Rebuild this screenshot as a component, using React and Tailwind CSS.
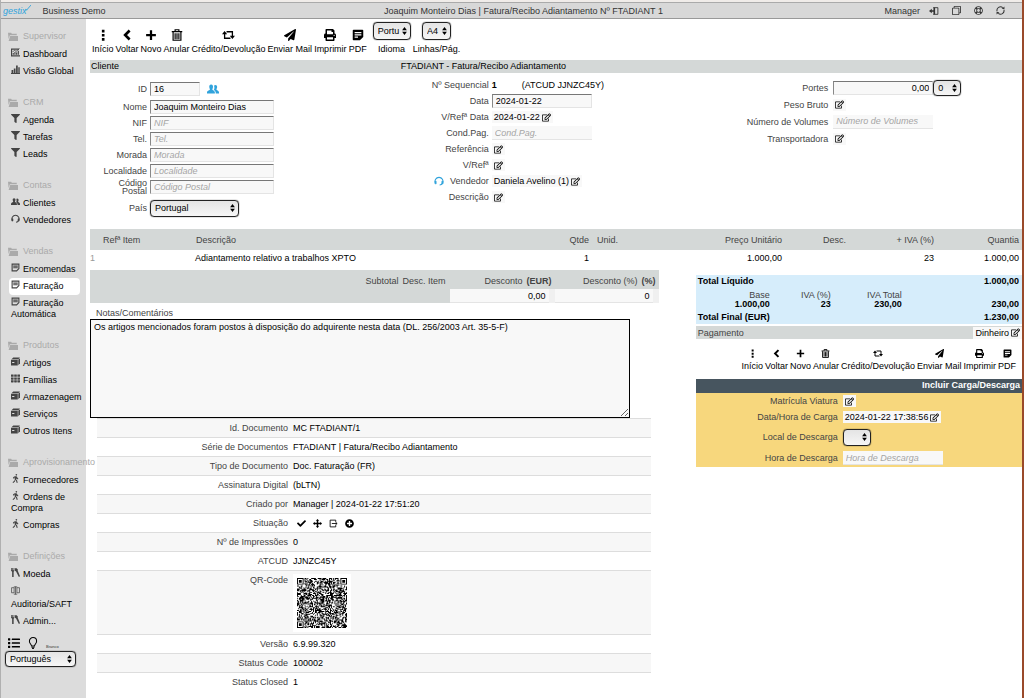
import clsx from 'clsx';
import {
    FaCheck,
    FaFilter,
    FaList,
    FaPaperPlane,
    FaPlusCircle,
    FaPrint,
    FaRegClone,
    FaRegEdit,
    FaRegLifeRing,
    FaTh,
    FaWalking,
} from 'react-icons/fa';

/* ---------- icons ---------- */

const DotsIcon = ({ className }) => (
    <svg viewBox="0 0 16 16" className={className} fill="currentColor" aria-hidden="true">
        <path d="M6.500 1h3.500v3.500H6.500zM6.500 6.500h3.500V10H6.500zM6.500 12h3.500v3.500H6.500z" />
    </svg>
);

const BackIcon = ({ className }) => (
    <svg viewBox="0 0 16 16" className={className} fill="none" stroke="currentColor" strokeWidth="3.500" aria-hidden="true">
        <path d="M11.500 2L5.500 8l6 6" />
    </svg>
);

const PlusIcon = ({ className }) => (
    <svg viewBox="0 0 16 16" className={className} fill="currentColor" aria-hidden="true">
        <path d="M6.500 1.500h3v5h5v3h-5v5h-3v-5h-5v-3h5z" />
    </svg>
);

const FolderIcon = ({ className }) => (
    <svg viewBox="0 0 16 14" className={className} fill="currentColor" aria-hidden="true">
        <path d="M0 1h5l1 1.500h8V5H3L1 11z" />
        <path d="M3.500 6H16v8H1z" />
    </svg>
);

const UsersIcon = ({ className }) => (
    <svg viewBox="0 0 16 16" className={className} fill="currentColor" aria-hidden="true">
        <path d="M5.500 2C7.500 2 8 3.500 8 5s-.5 2.500-1 3.200c0 1.300 3.500 1.800 3.500 4.300V14H0v-1.500c0-2.500 4-3 4-4.300C3.500 7.500 3 6.500 3 5s.5-3 2.500-3z" />
        <path d="M11 2.500c1.800 0 2.500 1.300 2.500 2.700s-.5 2.200-1 3c0 1.300 3.500 1.800 3.500 4V14h-4.300c.2-3-1.200-3.800-2.500-4.800.8-1.500 1-3.700.2-5.700.4-.7 1-1 1.600-1z" />
    </svg>
);

const NoteIcon = ({ className }) => (
    <svg viewBox="0 0 16 16" className={className} fill="currentColor" aria-hidden="true">
        <path fillRule="evenodd" d="M2 1h12a1 1 0 0 1 1 1v8.500l-4.500 4.500H2a1 1 0 0 1-1-1V2a1 1 0 0 1 1-1zm1.500 3v1.700h9V4zm0 3v1.700h9V7zm0 3v1.700H8V10z" />
    </svg>
);

const NoteOutlineIcon = ({ className }) => (
    <svg viewBox="0 0 16 16" className={className} fill="none" stroke="currentColor" strokeWidth="2" aria-hidden="true">
        <path d="M2 2h12v8l-4 4H2z" />
        <path d="M4 5.500h8M4 8.500h8" />
    </svg>
);

const TrashIcon = ({ className }) => (
    <svg viewBox="0 0 16 16" className={className} fill="none" stroke="currentColor" strokeWidth="1.600" aria-hidden="true">
        <path d="M1 3.500h14M5.500 3V1h5v2M2.800 4v11h10.400V4M5.500 5.500v8M8 5.500v8M10.500 5.500v8" />
    </svg>
);

const RetweetIcon = ({ className }) => (
    <svg viewBox="0 0 20 14" className={className} fill="none" stroke="currentColor" strokeWidth="2" aria-hidden="true">
        <path d="M4 5v7h9M16 9V2H7" />
        <path d="M0 6l4-5 4 5zM12 8l4 5 4-5z" fill="currentColor" stroke="none" />
    </svg>
);

const ChartIcon = ({ className }) => (
    <svg viewBox="0 0 16 16" className={className} fill="currentColor" aria-hidden="true">
        <path d="M0 1h14v2H2v10h14v2H0z" />
        <path d="M3 12V9h2v3zM6 12V7h2v5zM9 12V8h2v4zM12 12V5h2v7z" />
        <path d="M3 7l3-3 3 2 6-5" fill="none" stroke="currentColor" strokeWidth="1.500" />
    </svg>
);

const BarsIcon = ({ className }) => (
    <svg viewBox="0 0 16 16" className={className} fill="currentColor" aria-hidden="true">
        <path d="M0 14h16v2H0zM1 9h3v5H1zM5 6h3v8H5zM9 1h3v13H9zM13 4h2.500v10H13z" />
    </svg>
);

const HeadsetIcon = ({ className }) => (
    <svg viewBox="0 0 16 16" className={className} fill="none" stroke="currentColor" strokeWidth="1.800" aria-hidden="true">
        <path d="M2.500 11.500A6.300 6.300 0 1 1 13.500 11.500c-.8 1.800-2 2.800-4.500 3" />
        <path d="M1.500 8.500h2v4h-2zM12.500 8.500h2v4h-2z" fill="currentColor" strokeWidth="1" />
    </svg>
);

const BoxIcon = ({ className }) => (
    <svg viewBox="0 0 16 16" className={className} fill="currentColor" aria-hidden="true">
        <path d="M4 1h12l-3 3H1z" />
        <path fillRule="evenodd" d="M0 5h12v10H0zm2 4v1.500h4V9z" />
        <path d="M13 5l3-3v9l-3 3.500z" />
    </svg>
);

const ToolsIcon = ({ className }) => (
    <svg viewBox="0 0 16 16" className={className} fill="currentColor" aria-hidden="true">
        <path d="M0 0h1.300v4h1V0h1.400v4h1V0H6v5L4.700 6.500V16H2V6.500L0 5z" />
        <path d="M7 1l2-1 3 2v3l4 9.500-2 1.500L9 6 7 5z" />
    </svg>
);

const ScaleIcon = ({ className }) => (
    <svg viewBox="0 0 16 16" className={className} fill="none" stroke="currentColor" strokeWidth="1.300" aria-hidden="true">
        <path d="M8 1v14M5 14.500h6M5 1.500h6M6 3H1v9h5M10 3h5v9h-5M5.500 3v9M10.500 3v9" />
    </svg>
);

const BulbIcon = ({ className }) => (
    <svg viewBox="0 0 16 20" className={className} fill="none" stroke="currentColor" strokeWidth="1.700" aria-hidden="true">
        <path d="M5.500 15c0-3-3.500-4-3.500-8a6 6 0 0 1 12 0c0 4-3.500 5-3.500 8z" />
        <path d="M5.500 17h5M6.500 19h3" />
    </svg>
);

const ExitIcon = ({ className }) => (
    <svg viewBox="0 0 18 16" className={className} aria-hidden="true">
        <path d="M8 2h8v12H8" fill="none" stroke="currentColor" strokeWidth="1.600" />
        <path d="M0 8l5-4v2.500h3V1l3 1.500v11L8 15V9.500H5V12z" fill="currentColor" />
    </svg>
);

const RefreshIcon = ({ className }) => (
    <svg viewBox="0 0 16 16" className={className} fill="none" stroke="currentColor" strokeWidth="1.800" aria-hidden="true">
        <path d="M2 9.500A6.200 6.200 0 0 1 12 3M14 6.500A6.200 6.200 0 0 1 4 13" />
        <path d="M10 5.500h5V1zM6 10.500H1V15z" fill="currentColor" stroke="none" />
    </svg>
);

const MoveIcon = ({ className }) => (
    <svg viewBox="0 0 16 16" className={className} fill="currentColor" aria-hidden="true">
        <path d="M8 0l3 3H9.300v3.700H13V5l3 3-3 3V9.300H9.300V13H11l-3 3-3-3h1.700V9.300H3V11L0 8l3-3v1.700h3.700V3H5z" />
    </svg>
);

const ExportIcon = ({ className }) => (
    <svg viewBox="0 0 16 16" className={className} fill="none" stroke="currentColor" strokeWidth="1.500" aria-hidden="true">
        <path d="M12 5V2H2v12h10v-3M5 8h9M11.500 5.500L14.500 8l-3 2.500" />
    </svg>
);

/* ---------- QR code ---------- */

const QR_SIZE = 53;

const inFinder = (x, y) => {
    const near = 8;
    const far = QR_SIZE - 9;
    return (x < near && y < near) || (x > far && y < near) || (x < near && y > far);
};

const buildQrPath = () => {
    let seed = 20240122;
    let path = '';
    for (let y = 0; y < QR_SIZE; y++) {
        for (let x = 0; x < QR_SIZE; x++) {
            seed = (seed * 1103515245 + 12345) % 2147483648;
            if (!inFinder(x, y) && seed / 2147483648 > 0.46) path += `M${x} ${y}h1v1h-1z`;
        }
    }
    [[0, 0], [QR_SIZE - 7, 0], [0, QR_SIZE - 7]].forEach(([x, y]) => {
        path += `M${x} ${y}h7v7h-7zM${x + 1} ${y + 1}v5h5v-5zM${x + 2} ${y + 2}h3v3h-3z`;
    });
    return path;
};

const qrPath = buildQrPath();

/* ---------- data ---------- */

const menu = [
    {
        title: 'Supervisor',
        items: [
            { label: 'Dashboard', icon: ChartIcon },
            { label: 'Visão Global', icon: BarsIcon },
        ],
    },
    {
        title: 'CRM',
        items: [
            { label: 'Agenda', icon: FaFilter },
            { label: 'Tarefas', icon: FaFilter },
            { label: 'Leads', icon: FaFilter },
        ],
    },
    {
        title: 'Contas',
        items: [
            { label: 'Clientes', icon: UsersIcon },
            { label: 'Vendedores', icon: HeadsetIcon },
        ],
    },
    {
        title: 'Vendas',
        items: [
            { label: 'Encomendas', icon: NoteOutlineIcon },
            { label: 'Faturação', icon: NoteOutlineIcon, active: true },
            { label: 'Faturação Automática', icon: NoteOutlineIcon },
        ],
    },
    {
        title: 'Produtos',
        items: [
            { label: 'Artigos', icon: BoxIcon },
            { label: 'Famílias', icon: FaTh },
            { label: 'Armazenagem', icon: BoxIcon },
            { label: 'Serviços', icon: BoxIcon },
            { label: 'Outros Itens', icon: BoxIcon },
        ],
    },
    {
        title: 'Aprovisionamento',
        items: [
            { label: 'Fornecedores', icon: FaWalking },
            { label: 'Ordens de Compra', icon: FaWalking },
            { label: 'Compras', icon: FaWalking },
        ],
    },
    {
        title: 'Definições',
        items: [
            { label: 'Moeda', icon: ToolsIcon },
            { label: 'Auditoria/SAFT', icon: ScaleIcon, ownLine: true },
            { label: 'Admin...', icon: ToolsIcon },
        ],
    },
];

const actions = [
    { label: 'Início', icon: DotsIcon },
    { label: 'Voltar', icon: BackIcon },
    { label: 'Novo', icon: PlusIcon },
    { label: 'Anular', icon: TrashIcon },
    { label: 'Crédito/Devolução', icon: RetweetIcon },
    { label: 'Enviar Mail', icon: FaPaperPlane },
    { label: 'Imprimir', icon: FaPrint },
    { label: 'PDF', icon: NoteIcon },
];

const clientFields = [
    { id: 'nome', label: 'Nome', value: 'Joaquim Monteiro Dias' },
    { id: 'nif', label: 'NIF' },
    { id: 'tel', label: 'Tel.' },
    { id: 'morada', label: 'Morada' },
    { id: 'localidade', label: 'Localidade' },
    { id: 'codigo-postal', label: 'Código Postal' },
];

const details = [
    ['Id. Documento', 'MC FTADIANT/1'],
    ['Série de Documentos', 'FTADIANT | Fatura/Recibo Adiantamento'],
    ['Tipo de Documento', 'Doc. Faturação (FR)'],
    ['Assinatura Digital', '(bLTN)'],
    ['Criado por', 'Manager | 2024-01-22 17:51:20'],
    ['Situação', 'status'],
    ['Nº de Impressões', '0'],
    ['ATCUD', 'JJNZC45Y'],
    ['QR-Code', 'qr'],
    ['Versão', '6.9.99.320'],
    ['Status Code', '100002'],
    ['Status Closed', '1'],
];

/* ---------- form pieces ---------- */

const Select = ({ label, id, className, children }) => (
    <span className={clsx('relative inline-block shrink-0', className)}>
        <select
            id={id}
            aria-label={label}
            className="block h-full w-full appearance-none rounded border border-[#222] bg-linear-to-b from-[#e4e4e4] to-[#f6f6f6] pl-1 text-black shadow-[0_0_1px_#000]"
        >
            {children}
        </select>
        <svg viewBox="0 0 6 10" className="pointer-events-none absolute top-1/2 right-1 h-2 w-[5px] -translate-y-1/2" aria-hidden="true">
            <path d="M0 4l3-4 3 4zM0 6l3 4 3-4z" />
        </svg>
    </span>
);

const TextInput = ({ className, plain, ...props }) => (
    <input
        type="text"
        className={clsx(
            'h-[14px] rounded-none bg-[#f8f8f8] px-[3px] text-black placeholder:text-[#a5a5a5] placeholder:italic',
            plain ? 'border-b border-[#e4e4e4]' : 'border-t border-r border-b border-l border-t-[#777] border-r-[#e4e4e4] border-b-[#e4e4e4] border-l-[#888]',
            className
        )}
        {...props}
    />
);

const EditButton = ({ label, text }) => (
    <button type="button" aria-label={label} className="flex h-3 items-center gap-0.5 bg-[#f8f8f8] px-0.5 text-black">
        {text}
        <FaRegEdit className="size-[9px]" />
    </button>
);

const Row = ({ label, htmlFor, labelClass, className, wide, children }) => (
    <div className={clsx('flex items-center', wide ? 'gap-[5px]' : 'gap-[3px]', className)}>
        <label htmlFor={htmlFor} className={clsx('shrink-0 text-right leading-2 text-[#444]', labelClass)}>
            {label}
        </label>
        {children}
    </div>
);

const Actions = ({ small }) => (
    <>
        {actions.map(({ label, icon: Icon }) => (
            <button key={label} type="button" className="flex flex-col items-center gap-[3px] whitespace-nowrap text-black">
                <Icon
                    className={clsx(
                        small ? 'h-[9px]' : 'h-3',
                        label === 'Crédito/Devolução' ? (small ? 'w-[10px]' : 'w-[13px]') : small ? 'w-[9px]' : 'w-3'
                    )}
                />
                <span className="leading-[11px]">{label}</span>
            </button>
        ))}
    </>
);

/* ---------- page sections ---------- */

const Header = () => (
    <header className="grid h-4 grid-cols-[1fr_auto_1fr] items-center border-b border-[#999] bg-[#d8d8d8] text-[#333]">
        <div className="flex items-center">
            <a href="#" className="flex items-start pl-0.5 leading-3 text-[#30a3dc] italic">
                gestix
                <svg viewBox="0 0 8 8" className="-ml-0.5 size-[6px]" aria-hidden="true">
                    <path d="M0 5l2 2L8 0" fill="none" stroke="currentColor" strokeWidth="1.200" />
                </svg>
            </a>
            <span className="pl-3">Business Demo</span>
        </div>
        <h1 className="pl-6">Joaquim Monteiro Dias | Fatura/Recibo Adiantamento Nº FTADIANT 1</h1>
        <nav className="flex items-center justify-end gap-[13px] pr-[17px]">
            <a href="#" className="-mr-1">Manager</a>
            <a href="#" aria-label="Sair"><ExitIcon className="size-[10px]" /></a>
            <a href="#" aria-label="Duplicar"><FaRegClone className="size-[9px] -scale-100" /></a>
            <a href="#" aria-label="Ajuda"><FaRegLifeRing className="size-[9px]" /></a>
            <a href="#" aria-label="Atualizar"><RefreshIcon className="size-[9px]" /></a>
        </nav>
    </header>
);

const Sidebar = () => (
    <aside className="w-[85px] shrink-0 bg-[#dcdcdc] pt-[9px]">
        <nav className="flex flex-col gap-[14px]">
            {menu.map((group) => (
                <section key={group.title}>
                    <h2 className="mb-0.5 flex h-4 items-center gap-[5px] pl-[7px] whitespace-nowrap text-[#aaa]">
                        <FolderIcon className="h-[9px] w-[10px] shrink-0" />
                        {group.title}
                    </h2>
                    {group.items.map(({ label, icon: Icon, active, ownLine }) => (
                        <a
                            key={label}
                            href="#"
                            className={clsx('ml-2 block rounded-sm py-[3px] pl-0.5 leading-[11px] text-black', active ? 'mr-[6px] bg-white' : 'mr-0.5')}
                        >
                            <Icon className={clsx('mr-[3px] size-[9px] text-[#444]', ownLine ? 'mb-1 block' : '-mt-1 inline-block align-baseline')} />
                            {label}
                        </a>
                    ))}
                </section>
            ))}
        </nav>
        <div className="mt-[5px] flex h-4 items-center gap-2 pl-[7px]">
            <button type="button" aria-label="Lista"><FaList className="size-3" /></button>
            <button type="button" aria-label="Sugestões"><BulbIcon className="h-3 w-[10px]" /></button>
            <span className="self-end text-[4px] leading-[8px] text-[#333]">Branco</span>
        </div>
        <Select label="Língua" className="ml-1 h-4 w-[71px]">
            <option>Português</option>
        </Select>
    </aside>
);

const DocumentForm = () => (
    <form className="grid h-[156px] grid-cols-3 items-start">
        <div className="pt-[6px]">
            <Row label="ID" htmlFor="id" labelClass="w-[57px]" className="h-5">
                <TextInput id="id" defaultValue="16" className="w-[50px]" />
                <UsersIcon className="ml-1 size-3 text-[#30a3dc]" />
            </Row>
            {clientFields.map((field) => (
                <Row key={field.id} label={field.label} htmlFor={field.id} labelClass="w-[57px] pl-3" className="h-4">
                    <TextInput id={field.id} defaultValue={field.value} placeholder={field.label} className="w-[124px]" />
                </Row>
            ))}
            <Row label="País" htmlFor="pais" labelClass="w-[57px]" className="mt-1 h-[18px]">
                <Select id="pais" className="h-[17px] w-[89px]">
                    <option>Portugal</option>
                </Select>
            </Row>
        </div>

        <div className="pt-1 *:h-4">
            <Row label="Nº Sequencial" labelClass="w-[88px]">
                <b className="w-[27px] text-black">1</b>
                <span className="text-black">(ATCUD JJNZC45Y)</span>
            </Row>
            <Row label="Data" htmlFor="data" labelClass="w-[88px]">
                <TextInput id="data" defaultValue="2024-01-22" className="w-[100px]" />
            </Row>
            <Row label="V/Refª Data" labelClass="w-[88px]">
                <EditButton label="Editar V/Refª Data" text="2024-01-22" />
            </Row>
            <Row label="Cond.Pag." htmlFor="cond-pag" labelClass="w-[88px]">
                <TextInput id="cond-pag" placeholder="Cond.Pag." plain className="w-[100px]" />
            </Row>
            <Row label="Referência" labelClass="w-[88px]">
                <EditButton label="Editar Referência" />
            </Row>
            <Row label="V/Refª" labelClass="w-[88px]">
                <EditButton label="Editar V/Refª" />
            </Row>
            <Row
                label={
                    <span className="flex items-center justify-end gap-[6px]">
                        <HeadsetIcon className="size-[10px] text-[#30a3dc]" />
                        Vendedor
                    </span>
                }
                labelClass="w-[88px]"
            >
                <EditButton label="Editar Vendedor" text="Daniela Avelino (1)" />
            </Row>
            <Row label="Descrição" labelClass="w-[88px]">
                <EditButton label="Editar Descrição" />
            </Row>
        </div>

        <div className="pt-[6px] *:h-[17px]">
            <Row label="Portes" htmlFor="portes" labelClass="w-[117px]" wide>
                <span className="flex items-center">
                    <TextInput id="portes" defaultValue="0,00" className="w-[100px] text-right" />
                    <Select label="IVA dos portes" className="h-4 w-7">
                        <option>0</option>
                    </Select>
                </span>
            </Row>
            <Row label="Peso Bruto" labelClass="w-[117px]" wide>
                <EditButton label="Editar Peso Bruto" />
            </Row>
            <Row label="Número de Volumes" htmlFor="volumes" labelClass="w-[117px]" wide>
                <TextInput id="volumes" placeholder="Número de Volumes" plain className="w-[100px]" />
            </Row>
            <Row label="Transportadora" labelClass="w-[117px]" wide>
                <EditButton label="Editar Transportadora" />
            </Row>
        </div>
    </form>
);

const ItemsTable = () => (
    <table className="w-full table-fixed">
        <colgroup>
            <col className="w-[13px]" />
            <col className="w-[92px]" />
            <col />
            <col className="w-8" />
            <col className="w-[100px]" />
            <col className="w-[93px]" />
            <col className="w-16" />
            <col className="w-[88px]" />
            <col className="w-[88px]" />
        </colgroup>
        <thead>
            <tr className="h-[21px] bg-[#d4d8d7] text-[#444] *:font-normal">
                <td />
                <th className="text-left">Refª Item</th>
                <th className="pl-px text-left">Descrição</th>
                <th className="text-right">Qtde</th>
                <th className="pl-2 text-left">Unid.</th>
                <th className="text-right">Preço Unitário</th>
                <th className="text-right">Desc.</th>
                <th className="text-right">+ IVA (%)</th>
                <th className="pr-[3px] text-right">Quantia</th>
            </tr>
        </thead>
        <tbody>
            <tr className="h-[15px] text-black">
                <td className="text-[#999]">1</td>
                <td />
                <td>Adiantamento relativo a trabalhos XPTO</td>
                <td className="text-right">1</td>
                <td />
                <td className="text-right">1.000,00</td>
                <td />
                <td className="text-right">23</td>
                <td className="pr-[3px] text-right">1.000,00</td>
            </tr>
        </tbody>
    </table>
);

const DetailValue = ({ value }) => {
    if (value === 'status') {
        return (
            <span className="flex h-3 items-center gap-[7px] pl-1 text-black">
                <FaCheck className="size-[9px]" />
                <MoveIcon className="size-[9px]" />
                <ExportIcon className="size-[9px]" />
                <FaPlusCircle className="size-[9px]" />
            </span>
        );
    }
    if (value === 'qr') {
        return (
            <span className="block bg-white p-1">
                <svg viewBox="0 0 53 53" className="size-[50px]" role="img" aria-label="QR-Code">
                    <path d={qrPath} fillRule="evenodd" />
                </svg>
            </span>
        );
    }
    return value;
};

const LeftPanel = () => (
    <div className="w-[61%]">
        <div className="grid grid-cols-[1fr_105px_104px] bg-[#d4d8d7] text-[#444]">
            <div className="flex h-[19px] items-center justify-end gap-1 pt-[3px] pr-1">
                <span>Subtotal</span>
                <span>Desc. Item</span>
            </div>
            <label htmlFor="desc-eur" className="flex items-center justify-end gap-1 pt-[3px] pr-[3px]">
                Desconto <b>(EUR)</b>
            </label>
            <label htmlFor="desc-pct" className="flex items-center justify-end gap-1 pt-[3px] pr-[3px]">
                Desconto (%) <b>(%)</b>
            </label>
            <div />
            <div className="flex bg-[#f0f0f0] pr-[6px]">
                <TextInput id="desc-eur" defaultValue="0,00" plain className="w-full text-right" />
            </div>
            <div className="flex bg-[#f0f0f0] pr-[6px]">
                <TextInput id="desc-pct" defaultValue="0" plain className="w-full text-right" />
            </div>
        </div>

        <label htmlFor="notas" className="block pt-1 pl-[6px] text-[#444]">Notas/Comentários</label>
        <textarea
            id="notas"
            className="block h-[99px] w-[95%] resize border border-black bg-[#f8f8f8] px-[3px] py-px text-black"
            defaultValue="Os artigos mencionados foram postos à disposição do adquirente nesta data (DL. 256/2003 Art. 35-5-F)"
        />

        <dl className="mr-2 ml-[7px]">
            {details.map(([label, value]) => (
                <div key={label} className="flex min-h-[19px] gap-[5px] border-t border-[#ddd] odd:bg-[#f7f7f7]">
                    <dt className="w-[191px] shrink-0 pt-[3px] text-right text-[#444]">{label}</dt>
                    <dd className={clsx('text-black', value === 'qr' ? 'pt-[3px] pb-0.5' : 'pt-[3px]')}>
                        <DetailValue value={value} />
                    </dd>
                </div>
            ))}
        </dl>
    </div>
);

const RightPanel = () => (
    <div className="w-[35%] pt-[5px]">
        <div className="bg-[#d6edfb] pr-[3px] pl-0.5 font-bold text-black">
            <div className="flex justify-between">
                <span>Total Líquido</span>
                <span>1.000,00</span>
            </div>
            <div className="grid grid-cols-[72px_61px_71px_1fr] items-end pt-1 pb-0.5 text-right leading-[9px]">
                <span className="font-normal text-[#444]">Base</span>
                <span className="font-normal text-[#444]">IVA (%)</span>
                <span className="font-normal text-[#444]">IVA Total</span>
                <span />
                <span>1.000,00</span>
                <span>23</span>
                <span>230,00</span>
                <span>230,00</span>
            </div>
            <div className="flex justify-between pb-px">
                <span>Total Final (EUR)</span>
                <span>1.230,00</span>
            </div>
        </div>

        <div className="mt-0.5 flex h-[13px] items-center justify-between bg-[#d4d8d7] pl-0.5 text-[#444]">
            <span>Pagamento</span>
            <EditButton label="Editar Pagamento" text="Dinheiro" />
        </div>

        <div className="flex h-10 items-start justify-end gap-0.5 pt-[10px] pr-[6px]">
            <Actions small />
        </div>

        <h3 className="h-[14px] bg-[#47555f] pr-0.5 text-right font-bold text-white">Incluir Carga/Descarga</h3>
        <div className="bg-[#f7d77d]">
            <Row label="Matrícula Viatura" labelClass="w-[142px]" className="h-4" wide>
                <EditButton label="Editar Matrícula Viatura" />
            </Row>
            <Row label="Data/Hora de Carga" labelClass="w-[142px]" className="h-4" wide>
                <EditButton label="Editar Data/Hora de Carga" text="2024-01-22 17:38:56" />
            </Row>
            <Row label="Local de Descarga" htmlFor="local" labelClass="w-[142px]" className="h-6" wide>
                <Select id="local" className="h-[17px] w-7">
                    <option />
                </Select>
            </Row>
            <Row label="Hora de Descarga" htmlFor="hora" labelClass="w-[142px]" className="h-[18px]" wide>
                <TextInput id="hora" placeholder="Hora de Descarga" plain className="w-[100px]" />
            </Row>
        </div>
    </div>
);

const App = () => (
    <div className="flex min-h-screen flex-col border-r-2 border-l border-r-[#9a4a2a] border-l-[#b0b0b0] bg-white font-['Liberation_Sans',Arial,sans-serif] text-[9px] leading-3">
        <div className="h-[3px] border-b border-[#aaa] bg-[#f0ece9]" />
        <Header />
        <div className="flex flex-1">
            <Sidebar />
            <main className="min-w-0 flex-1 pl-1">
                <div className="flex h-[41px] items-start gap-0.5 pl-0.5">
                    <div className="flex gap-0.5 pt-[10px]">
                        <Actions />
                    </div>
                    <label className="flex flex-col items-center gap-[3px] pt-[3px] pl-1">
                        <Select label="Idioma" className="h-[18px] w-[38px]">
                            <option>Portu</option>
                        </Select>
                        Idioma
                    </label>
                    <label className="flex flex-col items-center gap-[3px] pt-[3px]">
                        <Select label="Linhas/Pág." className="h-[18px] w-[29px]">
                            <option>A4</option>
                        </Select>
                        Linhas/Pág.
                    </label>
                </div>
                <div className="grid grid-cols-3 bg-[#d4d8d7] pb-px text-black">
                    <h2 className="pl-px">Cliente</h2>
                    <h2>FTADIANT - Fatura/Recibo Adiantamento</h2>
                </div>
                <DocumentForm />
                <ItemsTable />
                <div className="mt-[5px] flex items-start justify-between">
                    <LeftPanel />
                    <RightPanel />
                </div>
            </main>
        </div>
    </div>
);

export default App;
